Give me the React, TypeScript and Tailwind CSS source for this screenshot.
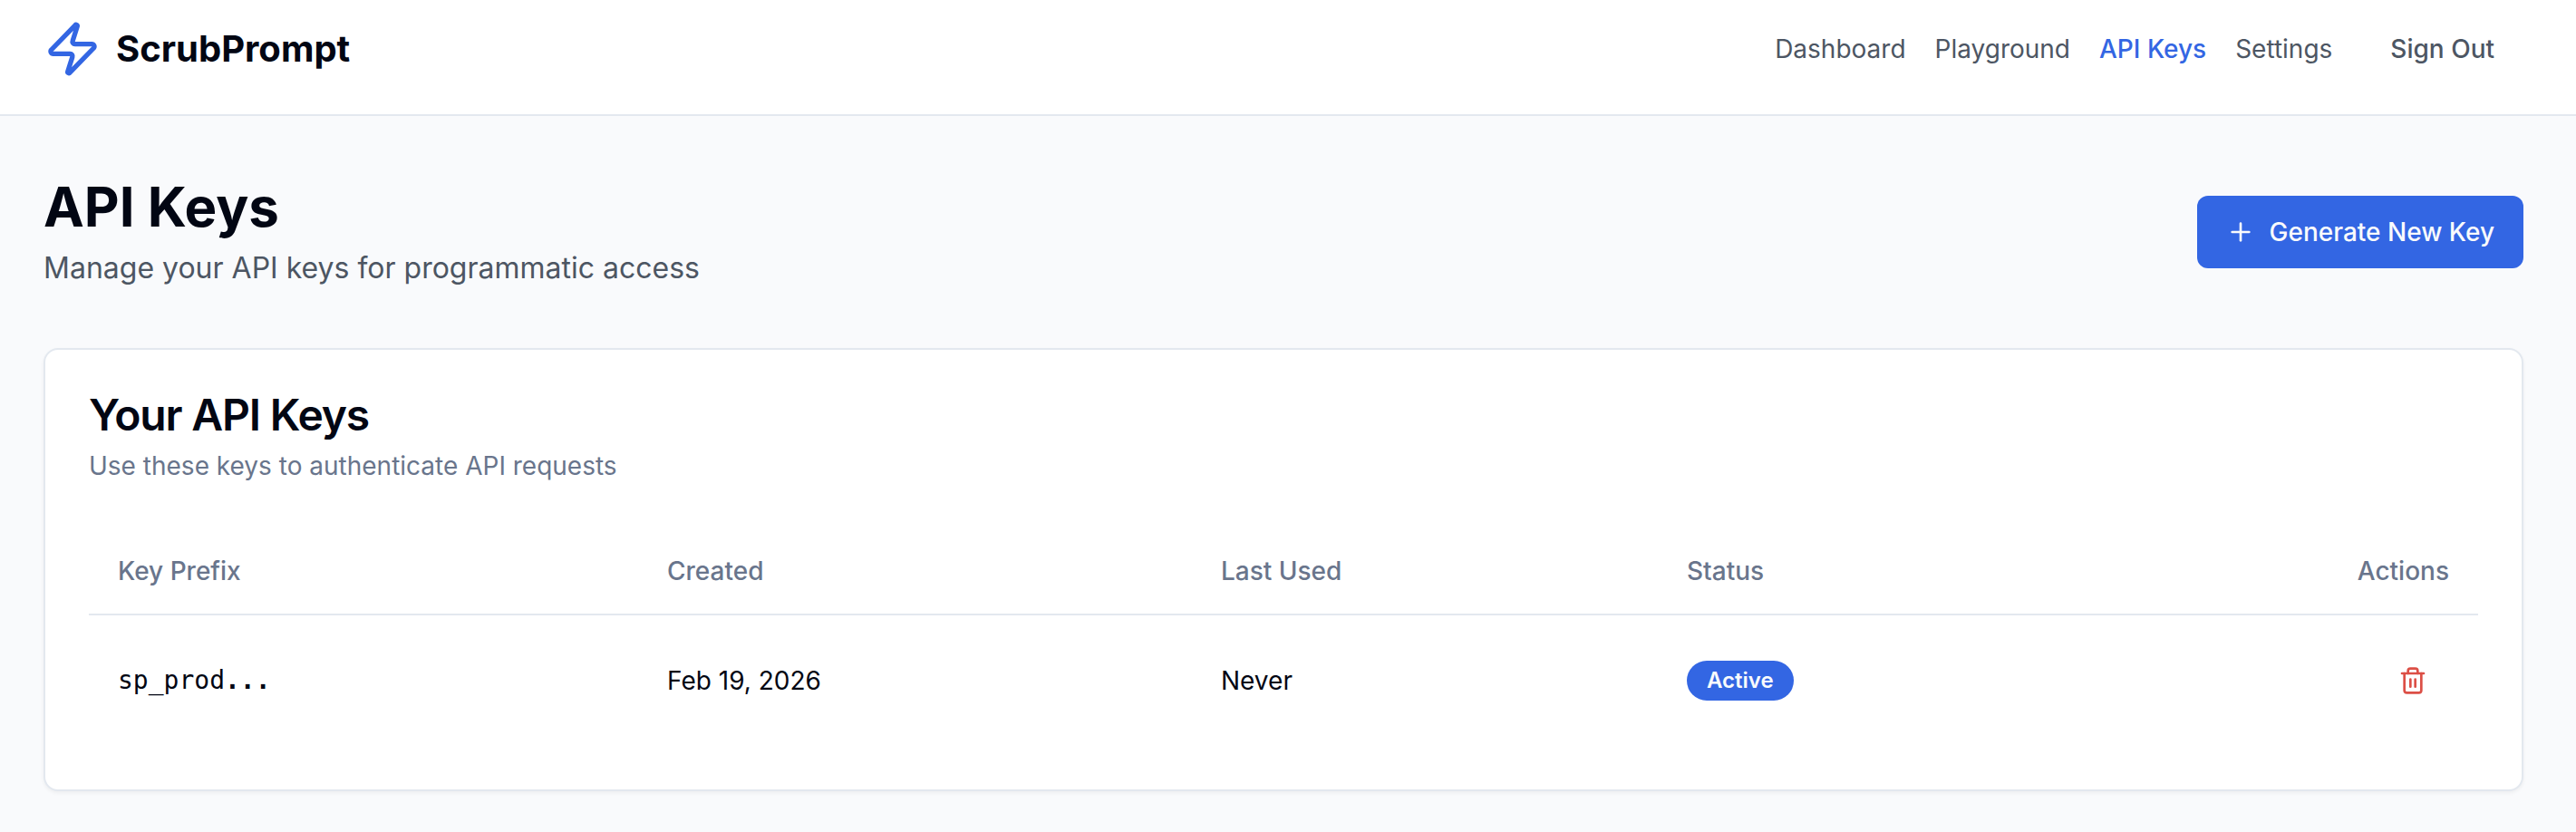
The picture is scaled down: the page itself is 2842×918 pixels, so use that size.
import React from "react";
import { Plus, Trash2, Zap } from "lucide-react";

const navLinks = [
  { label: "Dashboard", active: false },
  { label: "Playground", active: false },
  { label: "API Keys", active: true },
  { label: "Settings", active: false },
];

const apiKeys = [
  { prefix: "sp_prod", created: "Feb 19, 2026", lastUsed: "Never", status: "Active" },
];

function Header() {
  return (
    <header className="flex h-32 items-start justify-between border-b-2 border-[#e3e8ef] bg-white pt-3.5 pl-12 pr-[58px]">
      <a href="#" className="flex h-20 items-center gap-4">
        <Zap className="size-16 text-[#3366e3]" />
        <span className="text-[40px] font-bold leading-[56px]">ScrubPrompt</span>
      </a>
      <nav className="flex h-20 items-center gap-8 text-[28px] text-[#4d5663]">
        {navLinks.map((link) => (
          <a
            key={link.label}
            href="#"
            className={link.active ? "font-medium text-[#3366e3]" : ""}
          >
            {link.label}
          </a>
        ))}
        <button className="h-20 rounded-xl px-8 font-medium">Sign Out</button>
      </nav>
    </header>
  );
}

function KeysTable() {
  return (
    <table className="w-full table-fixed text-[28px] leading-10">
      <colgroup>
        <col className="w-[606px]" />
        <col className="w-[611px]" />
        <col className="w-[514px]" />
        <col className="w-[505px]" />
        <col />
      </colgroup>
      <thead>
        <tr className="h-24 border-b-2 border-[#e3e8ef] text-left text-[#69758c]">
          <th className="px-8 font-medium">Key Prefix</th>
          <th className="px-8 font-medium">Created</th>
          <th className="px-8 font-medium">Last Used</th>
          <th className="px-8 font-medium">Status</th>
          <th className="px-8 text-right font-medium">Actions</th>
        </tr>
      </thead>
      <tbody>
        {apiKeys.map((key) => (
          <tr key={key.prefix} className="h-36">
            <td className="px-8 font-['DejaVu_Sans_Mono',monospace]">
              {key.prefix}
              <span className="font-bold">...</span>
            </td>
            <td className="px-8">{key.created}</td>
            <td className="px-8">{key.lastUsed}</td>
            <td className="px-8">
              <span className="flex h-11 w-fit items-center rounded-full bg-[#3366e3] px-[22px] text-2xl font-semibold text-[#f9fafc]">
                {key.status}
              </span>
            </td>
            <td className="px-8">
              <button className="ml-auto flex h-18 items-center px-6 text-[#dc4f46]">
                <Trash2 className="size-8" />
              </button>
            </td>
          </tr>
        ))}
      </tbody>
    </table>
  );
}

export default function App() {
  return (
    <div className="min-h-screen bg-[#f9fafc] font-['Inter',sans-serif] text-[#020613]">
      <Header />

      <main className="pt-16 pl-12 pr-[58px]">
        {/* Page title */}
        <div className="flex items-center justify-between">
          <div>
            <h1 className="text-[60px] font-bold leading-[72px]">API Keys</h1>
            <p className="mt-2 text-[32px] leading-[48px] text-[#4d5663]">
              Manage your API keys for programmatic access
            </p>
          </div>
          <button className="flex h-20 items-center gap-4 rounded-xl bg-[#3366e3] px-8 text-[28px] font-medium text-[#f9fafc]">
            <Plus className="size-8" />
            Generate New Key
          </button>
        </div>

        {/* Keys card */}
        <section className="mt-16 h-[489px] rounded-2xl border-2 border-[#e3e8ef] bg-white p-12 shadow-[0_2px_4px_rgba(0,0,0,0.05)]">
          <h2 className="text-5xl font-semibold leading-none tracking-tight">Your API Keys</h2>
          <p className="mt-3 mb-12 text-[28px] leading-10 text-[#69758c]">
            Use these keys to authenticate API requests
          </p>
          <KeysTable />
        </section>
      </main>
    </div>
  );
}
